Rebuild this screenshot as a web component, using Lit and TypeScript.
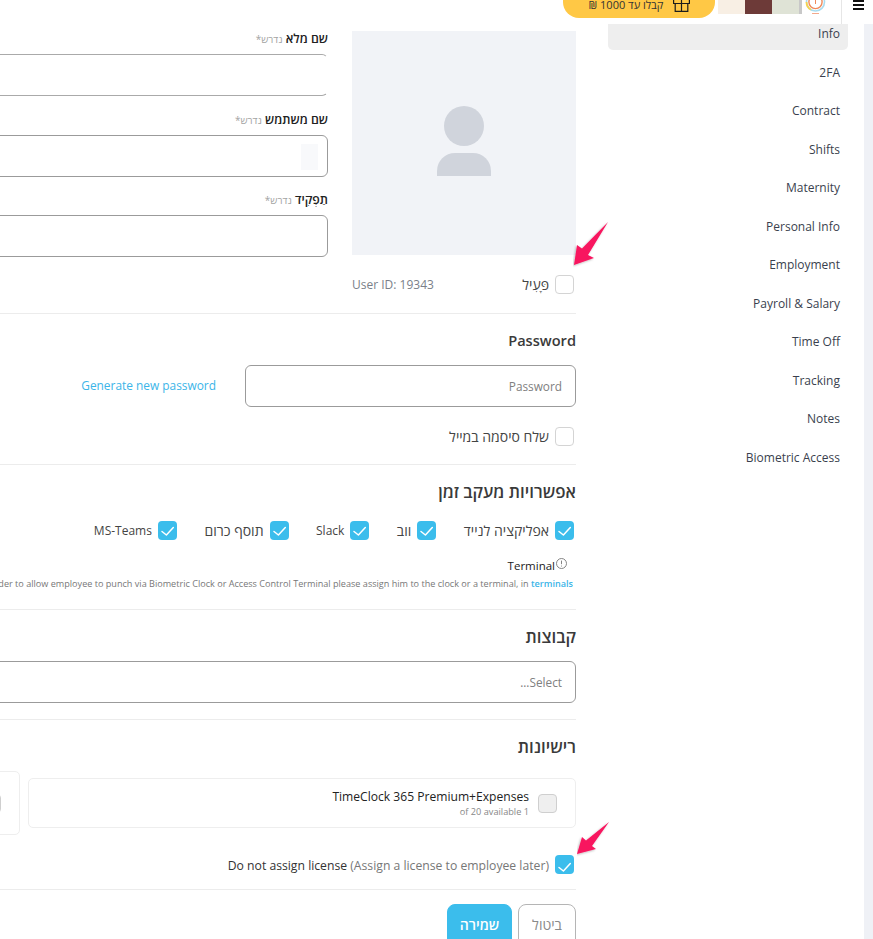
import { LitElement, html, css, svg } from "lit";
import { customElement } from "lit/decorators.js";

const F = `"Open Sans","Noto Sans","Noto Sans CJK SC",sans-serif`;

const shadow = svg`<defs><filter id="s" x="-30%" y="-30%" width="160%" height="160%"><feDropShadow dx="-1" dy="1" stdDeviation="1" flood-color="#000" flood-opacity=".28"/></filter></defs>`;

const arrow1 = html`<svg class="a1" viewBox="0 0 36 48" width="36" height="48">${shadow}
  <path d="M35 1 L15 34 L21 37 L1 44 L4 24 L9 27.5 Z" fill="#f8155f" filter="url(#s)"/>
</svg>`;
const arrow2 = html`<svg class="a2" viewBox="0 0 36 40" width="36" height="40">${shadow}
  <path d="M32 2 L15 26 L19 29 L0 34 L5 17 L9 20.5 Z" fill="#f8155f" filter="url(#s)"/>
</svg>`;

const check = svg`<path d="M4 10.5 L8.4 14 L15.3 6.5" fill="none" stroke="#fff" stroke-width="1.5" stroke-linecap="round" stroke-linejoin="round"/>`;

@customElement("app-root")
export class AppRoot extends LitElement {
  static styles = css`
    :host { display: block; position: relative; width: 873px; height: 939px; overflow: hidden; background: #fff; font-family: ${css([F] as any)}; color: #333; }
    * { box-sizing: border-box; }
    .topbar { position: absolute; top: 0; left: 0; right: 0; height: 24px; background: #fff; }
    .gutter { position: absolute; top: 24px; right: 0; bottom: 0; width: 9px; background: #eff1f6; }
    .promo { position: absolute; left: 563px; top: -30px; width: 152px; height: 48px; border-radius: 16px; background: #ffc845; display: flex; align-items: flex-end; justify-content: center; gap: 10px; padding: 0 0 6px 1px; font-size: 11px; color: #333; }
    .swatches { position: absolute; left: 718px; top: 0; height: 14px; display: flex; }
    .swatches i { display: block; height: 14px; }
    .s1 { width: 27px; background: #f8efe4; }
    .s2 { width: 27px; background: #6d3a38; }
    .s3 { width: 27px; background: #dfe3d6; }
    .s4 { width: 3px; background: #c8c8c8; }
    .logo { position: absolute; left: 805px; top: 0; }
    .vline { position: absolute; left: 841px; top: 0; width: 1px; height: 24px; background: #e6e6e6; }
    .burger { position: absolute; left: 853px; top: 0; width: 11px; }
    .burger i { display: block; height: 2px; background: #111; margin-bottom: 2px; }

    .side { position: absolute; left: 608px; top: 24px; width: 240px; display: flex; flex-direction: column; }
    .side a { display: block; height: 38.5px; padding: 0 8px; text-align: right; font-size: 12px; line-height: 19px; color: #3a3f4e; }
    .side a.active { height: 26px; background: #eeeeee; border-radius: 0 0 5px 5px; margin-bottom: 12.5px; }

    .form { position: absolute; left: -330px; top: 31px; width: 906px; direction: rtl; }
    .top { display: flex; gap: 24px; height: 282px; }
    .avatarcol { width: 224px; flex: none; display: flex; flex-direction: column; }
    .avatar { width: 224px; height: 224px; background: #f1f3f7; display: flex; align-items: center; justify-content: center; padding-bottom: 4px; }
    .idrow { display: flex; justify-content: space-between; align-items: center; margin-top: 20px; height: 19px; }
    .uid { direction: ltr; font-size: 12px; color: #7a7f89; }
    .fields { flex: 1; display: flex; flex-direction: column; }
    .lbl { height: 23px; font-size: 12.3px; font-weight: 600; color: #222; line-height: 16px; }
    .lbl small { font-size: 10px; font-weight: 400; color: #a3a3a3; }
    .input { border: 1px solid #9b9b9b; border-radius: 6px; height: 42px; flex: none; position: relative; background: #fff; display: flex; align-items: center; padding: 0 13px; font-size: 11.8px; color: #808080; }
    .fields .f1 { margin-bottom: 16px; border-right-color: #fff; border-top-color: #aaa; border-bottom-color: #aaa; }
    .fields .f2 { margin-bottom: 15px; }
    .key { position: absolute; right: 9px; top: 8px; width: 17px; height: 26px; background: #f8f9fb; }

    .sec { border-top: 1px solid #ececec; }
    .h { font-size: 14.6px; font-weight: 600; color: #3a3a3a; line-height: 20px; }
    .h.en { margin-top: -1px; }
    .h.he { font-size: 16.9px; font-weight: 600; }
    .chk { position: relative; width: 19px; height: 19px; border-radius: 4px; border: 1px solid #d4d4d4; background: #fff; flex: none; display: block; margin-right: 2px; }
    .chk.on { background: #3bbdec; border: none; }
    .chk.on svg { display: block; }
    .chk.dis { background: #efefef; }
    .cl { display: flex; align-items: center; gap: 6px; font-size: 12px; color: #444; white-space: nowrap; }
    .he-t { font-size: 14px; }

    .pw { padding-top: 17px; height: 151px; }
    .pwrow { display: flex; align-items: center; margin-top: 15px; gap: 29px; }
    .pwrow .input { width: 331px; }
    .gen { font-size: 11.9px; color: #3bb5e8; margin-bottom: 2px; }
    .pw .cl { margin-top: 20px; }

    .track { padding-top: 17px; height: 145px; }
    .opts { display: flex; gap: 25.5px; margin-top: 19px; }
    .term { margin-top: 18px; display: flex; font-size: 11.5px; color: #222; align-items: flex-start; height: 18px; padding-right: 8px; }
    .term svg { margin-top: -1px; }
    .note { font-size: 9.1px; color: #777; white-space: nowrap; padding-right: 3px; line-height: 14px; margin-top: 1px; }
    .note a { color: #3bb5e8; font-weight: 600; }

    .groups { padding-top: 17px; height: 110px; }
    .groups .input { margin-top: 14px; }

    .lic { padding-top: 17px; height: 170px; position: relative; }
    .boxes { display: flex; gap: 8px; margin-top: 14px; align-items: center; }
    .box { width: 548px; height: 50px; flex: none; border: 1px solid #eeeeee; border-radius: 5px; display: flex; align-items: center; padding: 0 18px; gap: 9px; }
    .box .chk { margin-right: 0; }
    .box .chk.dis { border-color: #cfcfcf; }
    .box.b2 { width: 300px; height: 64px; }
    .lt { font-size: 12.1px; color: #222; line-height: 17px; }
    .ls { font-size: 9.2px; color: #888; line-height: 13px; direction: ltr; text-align: right; }
    .noassign { margin-top: 20px; font-size: 12.2px; }
    .noassign > span { padding-top: 2px; }
    .noassign b { font-weight: 400; color: #333; }
    .noassign span span { color: #777; }

    .actions { border-top: 1px solid #ececec; padding-top: 14px; display: flex; gap: 6px; }
    .btn { width: 58px; height: 50px; border-radius: 8px; font-size: 14px; display: flex; align-items: flex-start; justify-content: center; padding-top: 10px; border: 1px solid #b5b5b5; color: #8a8a8a; }
    .btn.p { background: #3bbdec; border-color: #3bbdec; color: #fff; width: 65px; font-weight: 600; }

    .a1 { position: absolute; left: 573px; top: 221px; }
    .a2 { position: absolute; left: 577px; top: 820px; }
  `;

  cb(on = false, dis = false) {
    return html`<span class="chk ${on ? "on" : ""} ${dis ? "dis" : ""}">${on ? html`<svg viewBox="0 0 19 19" width="19" height="19">${check}</svg>` : ""}</span>`;
  }

  render() {
    const tabs = ["2FA","Contract","Shifts","Maternity","Personal Info","Employment","Payroll & Salary","Time Off","Tracking","Notes","Biometric Access"];
    return html`
      <div class="gutter"></div>
      <div class="side">
        <a class="active">Info</a>
        ${tabs.map((t) => html`<a>${t}</a>`)}
      </div>

      <div class="form">
        <div class="top">
          <div class="avatarcol">
            <div class="avatar">
              <svg width="54" height="70" viewBox="0 0 54 70">
                <circle cx="27" cy="20" r="20" fill="#d0d4dc"/>
                <path d="M0 70 V65 A18 18 0 0 1 18 47 H36 A18 18 0 0 1 54 65 V70Z" fill="#d0d4dc"/>
              </svg>
            </div>
            <div class="idrow">
              <label class="cl">${this.cb()}<span class="he-t">פָּעִיל</span></label>
              <span class="uid">User ID: 19343</span>
            </div>
          </div>
          <div class="fields">
            <div class="lbl">שם מלא <small>נדרש*</small></div>
            <div class="input f1"></div>
            <div class="lbl">שם משתמש <small>נדרש*</small></div>
            <div class="input f2"><span class="key"></span></div>
            <div class="lbl">תַפְקִיד <small>נדרש*</small></div>
            <div class="input"></div>
          </div>
        </div>

        <div class="sec pw">
          <div class="h en">Password</div>
          <div class="pwrow">
            <div class="input">Password</div>
            <a class="gen">Generate new password</a>
          </div>
          <label class="cl">${this.cb()}<span class="he-t">שלח סיסמה במייל</span></label>
        </div>

        <div class="sec track">
          <div class="h he">אפשרויות מעקב זמן</div>
          <div class="opts">
            <label class="cl">${this.cb(true)}<span class="he-t">אפליקציה לנייד</span></label>
            <label class="cl">${this.cb(true)}<span class="he-t">ווב</span></label>
            <label class="cl">${this.cb(true)}Slack</label>
            <label class="cl">${this.cb(true)}<span class="he-t">תוסף כרום</span></label>
            <label class="cl">${this.cb(true)}MS-Teams</label>
          </div>
          <div class="term">
            <svg width="13" height="13" viewBox="0 0 13 13"><circle cx="6.5" cy="6.5" r="5" fill="none" stroke="#777" stroke-width=".9"/><path d="M6.5 3.6v3.6M6.5 8.6v.9" stroke="#777" stroke-width=".9"/></svg>
            <span>Terminal</span>
          </div>
          <div class="note"><a>terminals</a> <span dir="ltr">In order to allow employee to punch via Biometric Clock or Access Control Terminal please assign him to the clock or a terminal, in</span></div>
        </div>

        <div class="sec groups">
          <div class="h he">קבוצות</div>
          <div class="input">Select...</div>
        </div>

        <div class="sec lic">
          <div class="h he">רישיונות</div>
          <div class="boxes">
            <div class="box">
              ${this.cb(false, true)}
              <div><div class="lt" dir="ltr">TimeClock 365 Premium+Expenses</div><div class="ls">of 20 available 1</div></div>
            </div>
            <div class="box b2">${this.cb(false, true)}</div>
          </div>
          <div class="cl noassign">${this.cb(true)}<span dir="ltr"><b>Do not assign license</b> <span>(Assign a license to employee later)</span></span></div>
        </div>

        <div class="actions">
          <div class="btn">ביטול</div>
          <div class="btn p">שמירה</div>
        </div>
      </div>

      <div class="topbar"></div>
      <div class="promo">
        <span dir="rtl">קבלו עד 1000 ₪</span>
        <svg width="17" height="14" viewBox="0 0 17 14"><path d="M.6 1.5h15.8v4H.6zM2.2 5.5v7.9h12.6V5.5M8.5 1.5v11.9" fill="none" stroke="#1c1c1c" stroke-width="1.2"/></svg>
      </div>
      <div class="swatches"><i class="s1"></i><i class="s2"></i><i class="s3"></i><i class="s4"></i></div>
      <svg class="logo" width="21" height="15" viewBox="0 0 21 15">
        <circle cx="10.5" cy="2" r="9" fill="#fff" stroke="#a9dcef" stroke-width="1.6"/>
        <path d="M1.5 2 A9 9 0 0 0 6 9.8" fill="none" stroke="#f6d34f" stroke-width="1.8"/>
        <circle cx="10.5" cy="2" r="6.6" fill="#fff" stroke="#f08a5a" stroke-width="1.4"/>
        <path d="M10.5 -2v6" stroke="#f08a5a" stroke-width="1"/>
        <path d="M7 13.5h7" stroke="#f3a98c" stroke-width="1"/>
      </svg>
      <div class="vline"></div>
      <div class="burger"><i></i><i></i><i></i></div>
      ${arrow1}
      ${arrow2}
    `;
  }
}
